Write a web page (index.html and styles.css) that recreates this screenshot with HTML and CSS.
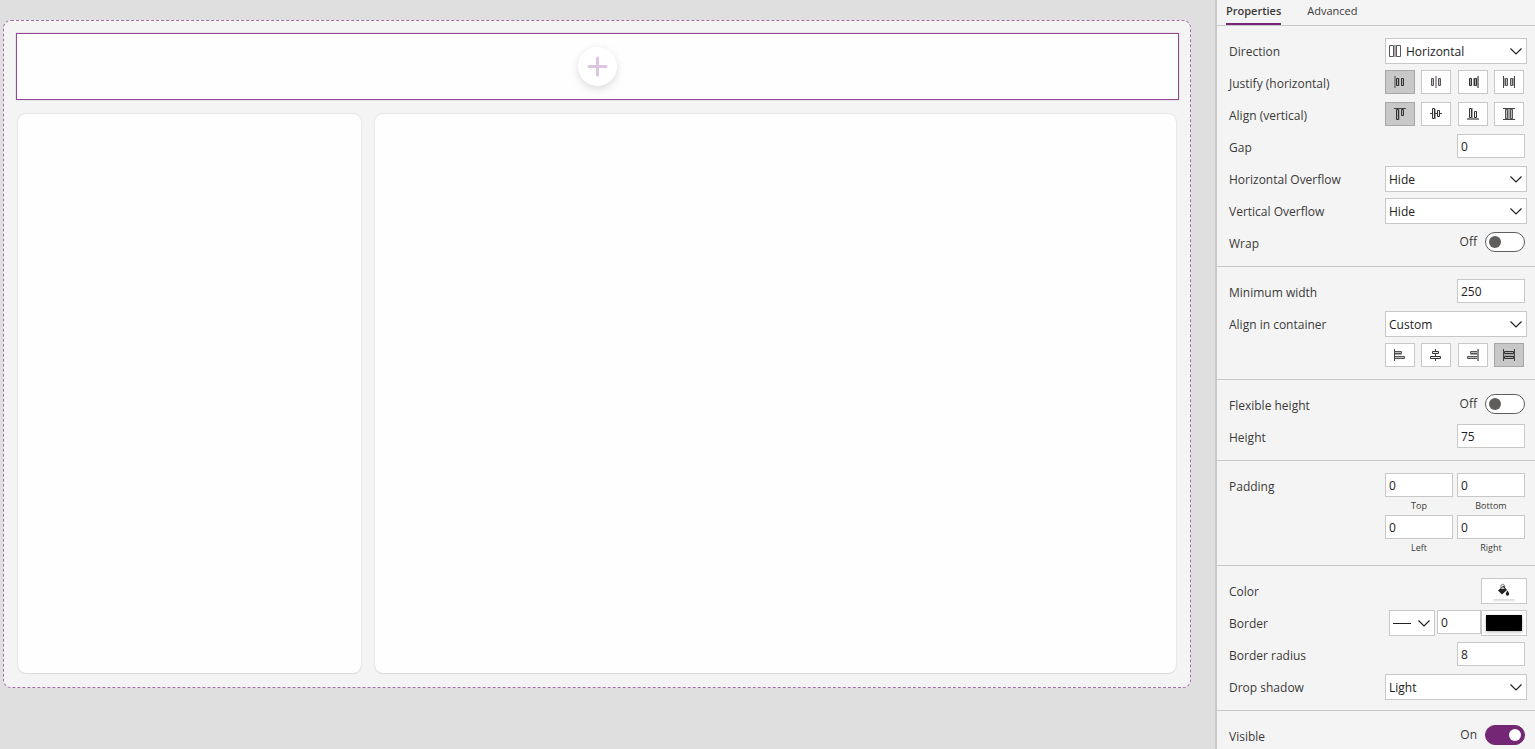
FILE: index.html
```
<!DOCTYPE html>
<html lang="en">
<head>
<meta charset="utf-8">
<title>App editor</title>
<link rel="stylesheet" href="styles.css">
</head>
<body>
<div class="editor">
  <main class="canvas">
    <div class="screen">
      <section class="selected">
        <button class="add" aria-label="Insert item">
          <svg width="21" height="21" viewBox="0 0 21 21" fill="none" stroke="#dcc5de" stroke-width="3" stroke-linecap="round"><path d="M10.500 2v17M2 10.500h17"/></svg>
        </button>
      </section>
      <div class="columns">
        <section class="card card-side"></section>
        <section class="card card-main"></section>
      </div>
    </div>
  </main>

  <aside class="panel">
    <nav class="tabs">
      <button class="tab tab-active">Properties</button>
      <button class="tab">Advanced</button>
    </nav>

    <section class="group">
      <div class="row">
        <label class="label" for="direction">Direction</label>
        <div class="picker">
          <select class="select select-with-icon" id="direction"><option>Horizontal</option></select>
          <svg class="lead" width="14" height="14" viewBox="0 0 14 14" fill="#fff" stroke="#555"><path d="M5 1h2v12H5z" fill="#aaa" stroke="none"/><path d="M.5 1.500h4v11h-4zM7.500 1.500h4v11h-4z"/></svg>
          <svg class="chevron" width="12" height="7" viewBox="0 0 12 7"><path d="M.5.5 6 6 11.500.5"/></svg>
        </div>
      </div>
      <div class="row">
        <span class="label">Justify (horizontal)</span>
        <div class="choices">
          <button class="choice choice-on" aria-label="Start"><svg width="16" height="16" viewBox="0 0 16 16"><path class="soft" d="M2 2h2v12H2z"/><path class="box" d="M4.500 4.500h2v7h-2zM9.500 4.500h2v7h-2z"/><path class="mid" d="M7 4h1v8H7z"/></svg></button>
          <button class="choice" aria-label="Center"><svg width="16" height="16" viewBox="0 0 16 16"><path class="box pale" d="M3.500 4.500h2v7h-2zM10.500 4.500h2v7h-2z"/><path class="mauve" d="M7 2h2v12H7z"/></svg></button>
          <button class="choice" aria-label="End"><svg width="16" height="16" viewBox="0 0 16 16"><path class="soft" d="M12 2h2v12h-2z"/><path class="box" d="M4.500 4.500h2v7h-2zM9.500 4.500h2v7h-2z"/><path class="mid" d="M8 4h1v8H8z"/></svg></button>
          <button class="choice" aria-label="Space between"><svg width="16" height="16" viewBox="0 0 16 16"><path class="mid" d="M3 4h1v8H3zM12 4h1v8h-1z"/><path class="line" d="M2.500 2v12M13.500 2v12"/><path class="box pale" d="M4.500 4.500h2v7h-2zM9.500 4.500h2v7h-2z"/></svg></button>
        </div>
      </div>
      <div class="row">
        <span class="label">Align (vertical)</span>
        <div class="choices">
          <button class="choice choice-on" aria-label="Start"><svg width="16" height="16" viewBox="0 0 16 16"><path class="mid" d="M7 3h1v11H7z"/><path class="line" d="M2 2.500h12"/><path class="box" d="M4.500 3.500h2v10h-2zM9.500 3.500h2v6h-2z"/></svg></button>
          <button class="choice" aria-label="Center"><svg width="16" height="16" viewBox="0 0 16 16"><path class="mid" d="M7 3h1v10H7z"/><path class="line" d="M2 7.500h12"/><path class="box clear" d="M4.500 2.500h2v10h-2zM9.500 4.500h2v6h-2z"/></svg></button>
          <button class="choice" aria-label="End"><svg width="16" height="16" viewBox="0 0 16 16"><path class="soft" d="M2 12h12v2H2z"/><path class="mid" d="M7 2h1v10H7z"/><path class="box clear" d="M4.500 2.500h2v9h-2zM9.500 5.500h2v6h-2z"/></svg></button>
          <button class="choice" aria-label="Stretch"><svg width="16" height="16" viewBox="0 0 16 16"><path class="mid" d="M4 3h8v10H4z"/><path class="line" d="M2 2.500h12M2 13.500h12"/><path class="box pale" d="M4.500 3.500h2v9h-2zM9.500 3.500h2v9h-2z"/></svg></button>
        </div>
      </div>
      <div class="row">
        <label class="label" for="gap">Gap</label>
        <input class="field" id="gap" type="text" value="0">
      </div>
      <div class="row">
        <label class="label" for="hover">Horizontal Overflow</label>
        <div class="picker">
          <select class="select" id="hover"><option>Hide</option></select>
          <svg class="chevron" width="12" height="7" viewBox="0 0 12 7"><path d="M.5.5 6 6 11.500.5"/></svg>
        </div>
      </div>
      <div class="row">
        <label class="label" for="vover">Vertical Overflow</label>
        <div class="picker">
          <select class="select" id="vover"><option>Hide</option></select>
          <svg class="chevron" width="12" height="7" viewBox="0 0 12 7"><path d="M.5.5 6 6 11.500.5"/></svg>
        </div>
      </div>
      <div class="row">
        <label class="label" for="wrap">Wrap</label>
        <div class="toggle"><span>Off</span><input class="switch" id="wrap" type="checkbox" role="switch"></div>
      </div>
    </section>

    <section class="group">
      <div class="row">
        <label class="label" for="minw">Minimum width</label>
        <input class="field" id="minw" type="text" value="250">
      </div>
      <div class="row">
        <label class="label" for="alignin">Align in container</label>
        <div class="picker">
          <select class="select" id="alignin"><option>Custom</option></select>
          <svg class="chevron" width="12" height="7" viewBox="0 0 12 7"><path d="M.5.5 6 6 11.500.5"/></svg>
        </div>
      </div>
      <div class="row row-end">
        <div class="choices">
          <button class="choice" aria-label="Start"><svg width="16" height="16" viewBox="0 0 16 16"><path class="mid" d="M3 7h7v1H3z"/><path class="box pale" d="M2.500 4.500h7v2h-7zM2.500 9.500h10v2h-10z"/><path class="line" d="M2.500 2v12"/></svg></button>
          <button class="choice" aria-label="Center"><svg width="16" height="16" viewBox="0 0 16 16"><path class="line" d="M7.500 2v12"/><path class="box clear" d="M4.500 4.500h6v2h-6zM2.500 9.500h10v2h-10z"/></svg></button>
          <button class="choice" aria-label="End"><svg width="16" height="16" viewBox="0 0 16 16"><path class="mid" d="M5 7h7v1H5z"/><path class="box pale" d="M5.500 4.500h7v2h-7zM2.500 9.500h10v2h-10z"/><path class="soft" d="M12 2h2v12h-2z"/></svg></button>
          <button class="choice choice-on" aria-label="Stretch"><svg width="16" height="16" viewBox="0 0 16 16"><path class="mid" d="M3 4h10v8H3z"/><path class="box" d="M3.500 4.500h9v2h-9zM3.500 9.500h9v2h-9z"/><path class="line" d="M2.500 2v12M13.500 2v12"/></svg></button>
        </div>
      </div>
    </section>

    <section class="group">
      <div class="row">
        <label class="label" for="flexh">Flexible height</label>
        <div class="toggle"><span>Off</span><input class="switch" id="flexh" type="checkbox" role="switch"></div>
      </div>
      <div class="row">
        <label class="label" for="height">Height</label>
        <input class="field" id="height" type="text" value="75">
      </div>
    </section>

    <section class="group">
      <div class="row">
        <span class="label">Padding</span>
        <div class="sides">
          <div class="side"><input class="field" id="ptop" type="text" value="0"><label class="caption" for="ptop">Top</label></div>
          <div class="side"><input class="field" id="pbottom" type="text" value="0"><label class="caption" for="pbottom">Bottom</label></div>
          <div class="side"><input class="field" id="pleft" type="text" value="0"><label class="caption" for="pleft">Left</label></div>
          <div class="side"><input class="field" id="pright" type="text" value="0"><label class="caption" for="pright">Right</label></div>
        </div>
      </div>
    </section>

    <section class="group">
      <div class="row">
        <span class="label">Color</span>
        <button class="swatch" aria-label="Fill color">
          <span class="chip chip-fill"><svg width="14" height="14" viewBox="0 0 14 14"><path d="M4 5.500V3a1.800 1.800 0 0 1 3.500-.5V5" fill="none" stroke="#777"/><path d="M6.500 2.500 1 7.500l4 4 5-4.500z" fill="#222"/><path d="M6 3.500 3.500 6H8z" fill="#bbb"/><path d="M10.500 7.500c1 1.700 1.700 2.500 1.700 3.500a1.700 1.700 0 0 1-3.400 0c0-1 .7-1.800 1.700-3.500z" fill="#222"/></svg></span>
        </button>
      </div>
      <div class="row">
        <label class="label" for="bwidth">Border</label>
        <div class="border-controls">
          <div class="picker picker-small">
            <select class="select" aria-label="Border style"><option></option></select>
            <svg class="lead" width="18" height="14" viewBox="0 0 18 14" stroke="#222"><path d="M0 7.500h18"/></svg>
            <svg class="chevron" width="12" height="7" viewBox="0 0 12 7"><path d="M.5.5 6 6 11.500.5"/></svg>
          </div>
          <input class="field field-small" id="bwidth" type="text" value="0">
          <button class="swatch" aria-label="Border color"><span class="chip chip-black"></span></button>
        </div>
      </div>
      <div class="row">
        <label class="label" for="radius">Border radius</label>
        <input class="field" id="radius" type="text" value="8">
      </div>
      <div class="row">
        <label class="label" for="shadow">Drop shadow</label>
        <div class="picker">
          <select class="select" id="shadow"><option>Light</option></select>
          <svg class="chevron" width="12" height="7" viewBox="0 0 12 7"><path d="M.5.5 6 6 11.500.5"/></svg>
        </div>
      </div>
    </section>

    <section class="group">
      <div class="row">
        <label class="label" for="visible">Visible</label>
        <div class="toggle"><span>On</span><input class="switch" id="visible" type="checkbox" role="switch" checked></div>
      </div>
    </section>
  </aside>
</div>
</body>
</html>
```
FILE: styles.css
```
* { box-sizing: border-box; }

body {
  margin: 0;
  font-family: "Open Sans", "Noto Sans", sans-serif;
  font-size: 12px;
  color: #3b3a39;
}

button, input, select { font: inherit; color: inherit; margin: 0; }

.editor {
  display: flex;
  height: 100vh;
  overflow: hidden;
}

/* Canvas */
.canvas {
  flex: 1;
  display: flex;
  padding: 20px 24px 61px 3px;
  background: #dfdfdf;
}

.screen {
  flex: 1;
  display: flex;
  flex-direction: column;
  gap: 14px;
  padding: 12px 11px 14px 12px;
  border: 1px dashed #a56ea7;
  border-radius: 8px;
  background: #f4f4f4;
}

.selected {
  display: flex;
  align-items: center;
  justify-content: center;
  height: 67px;
  border: 1px solid #8f4a92;
  background: #fefefe;
  box-shadow: 0 0 1px #b98fbb;
}

.add {
  display: flex;
  align-items: center;
  justify-content: center;
  width: 39px;
  height: 39px;
  padding: 0;
  border: 0;
  border-radius: 50%;
  background: #fff;
  box-shadow: 0 3px 8px rgba(0, 0, 0, 0.14);
}

.columns {
  flex: 1;
  display: flex;
  gap: 14px;
  padding: 0 3px 0 2px;
}

.card {
  border-radius: 8px;
  background: #fefefe;
  box-shadow: 0 0 2px rgba(0, 0, 0, 0.16), 0 1px 1px rgba(0, 0, 0, 0.06);
}

.card-side { flex: 3; }
.card-main { flex: 7; }

/* Properties panel */
.panel {
  width: 320px;
  border-left: 2px solid #c8c8c8;
  background: #f4f4f4;
  overflow: hidden;
}

.tabs {
  display: flex;
  gap: 26px;
  height: 26px;
  padding-left: 9px;
  border-bottom: 1px solid #c8c8c8;
}

.tab {
  padding: 0 0 2px;
  border: 0;
  border-bottom: 2px solid transparent;
  background: none;
  font-size: 11px;
}

.tab-active {
  border-color: #742774;
  font-weight: 600;
}

.group {
  padding: 10px 8px 6px 12px;
  border-bottom: 1px solid #c8c8c8;
}

.row {
  display: flex;
  justify-content: space-between;
  align-items: flex-start;
  min-height: 32px;
  padding-top: 2px;
}

.row-end { justify-content: flex-end; }

.label { line-height: 28px; }

.field {
  width: 68px;
  height: 24px;
  margin-right: 2px;
  padding: 0 3px;
  border: 1px solid #c8c8c8;
  border-radius: 0;
  background: #fff;
  color: #222;
}

.picker {
  position: relative;
  width: 142px;
}

.picker-small { width: 46px; }

.select {
  display: block;
  width: 100%;
  height: 26px;
  padding: 0 20px 0 3px;
  border: 1px solid #c8c8c8;
  border-radius: 0;
  background: #fff;
  color: #222;
  appearance: none;
}

.select-with-icon { padding-left: 20px; }

.lead, .chevron {
  position: absolute;
  pointer-events: none;
}

.lead { left: 4px; top: 6px; }

.chevron {
  right: 5px;
  top: 10px;
  fill: none;
  stroke: #222;
  stroke-width: 1.2;
}

.choices {
  display: flex;
  justify-content: space-between;
  width: 139px;
  margin-right: 3px;
}

.choice {
  display: flex;
  align-items: center;
  justify-content: center;
  width: 30px;
  height: 24px;
  padding: 0;
  border: 1px solid #c8c8c8;
  background: #fff;
}

.choice-on {
  border-color: #a6a6a6;
  background: #c8c8c8;
}

.soft { fill: #8a8a8a; }
.mid { fill: #a4a4a4; }
.mauve { fill: #ad9bb0; }
.line { fill: none; stroke: #444; }
.box { fill: #aaa; stroke: #333; }
.pale { fill: #bbb; stroke: #555; }
.clear { fill: #eee; stroke: #333; }

.toggle {
  display: flex;
  align-items: center;
  gap: 8px;
  padding: 2px 2px 0 0;
  line-height: 20px;
}

.switch {
  display: flex;
  align-items: center;
  width: 40px;
  height: 20px;
  padding: 0 3px;
  border: 1px solid #605e5c;
  border-radius: 10px;
  background: #fff;
  appearance: none;
}

.switch::before {
  content: "";
  width: 12px;
  height: 12px;
  border-radius: 50%;
  background: #605e5c;
}

.switch:checked {
  justify-content: flex-end;
  border-color: #742774;
  background: #742774;
}

.switch:checked::before { background: #fff; }

.sides {
  display: grid;
  grid-template-columns: 68px 68px;
  column-gap: 4px;
  margin-right: 2px;
  padding-bottom: 2px;
}

.side {
  display: flex;
  flex-direction: column;
}

.caption {
  font-size: 9px;
  line-height: 18px;
  text-align: center;
}

.swatch {
  display: flex;
  align-items: center;
  justify-content: center;
  width: 46px;
  height: 26px;
  padding: 0;
  border: 1px solid #c8c8c8;
  background: #fff;
}

.chip {
  display: flex;
  justify-content: center;
  width: 36px;
  height: 16px;
}

.chip-fill {
  width: 24px;
  box-shadow: 0 3px 2px -1px rgba(0, 0, 0, 0.14);
}

.chip-black {
  background: #000;
  box-shadow: 0 1px 3px rgba(0, 0, 0, 0.3);
}

.border-controls { display: flex; }

.field-small {
  width: 44px;
  margin: 0 0 0 2px;
}
```
